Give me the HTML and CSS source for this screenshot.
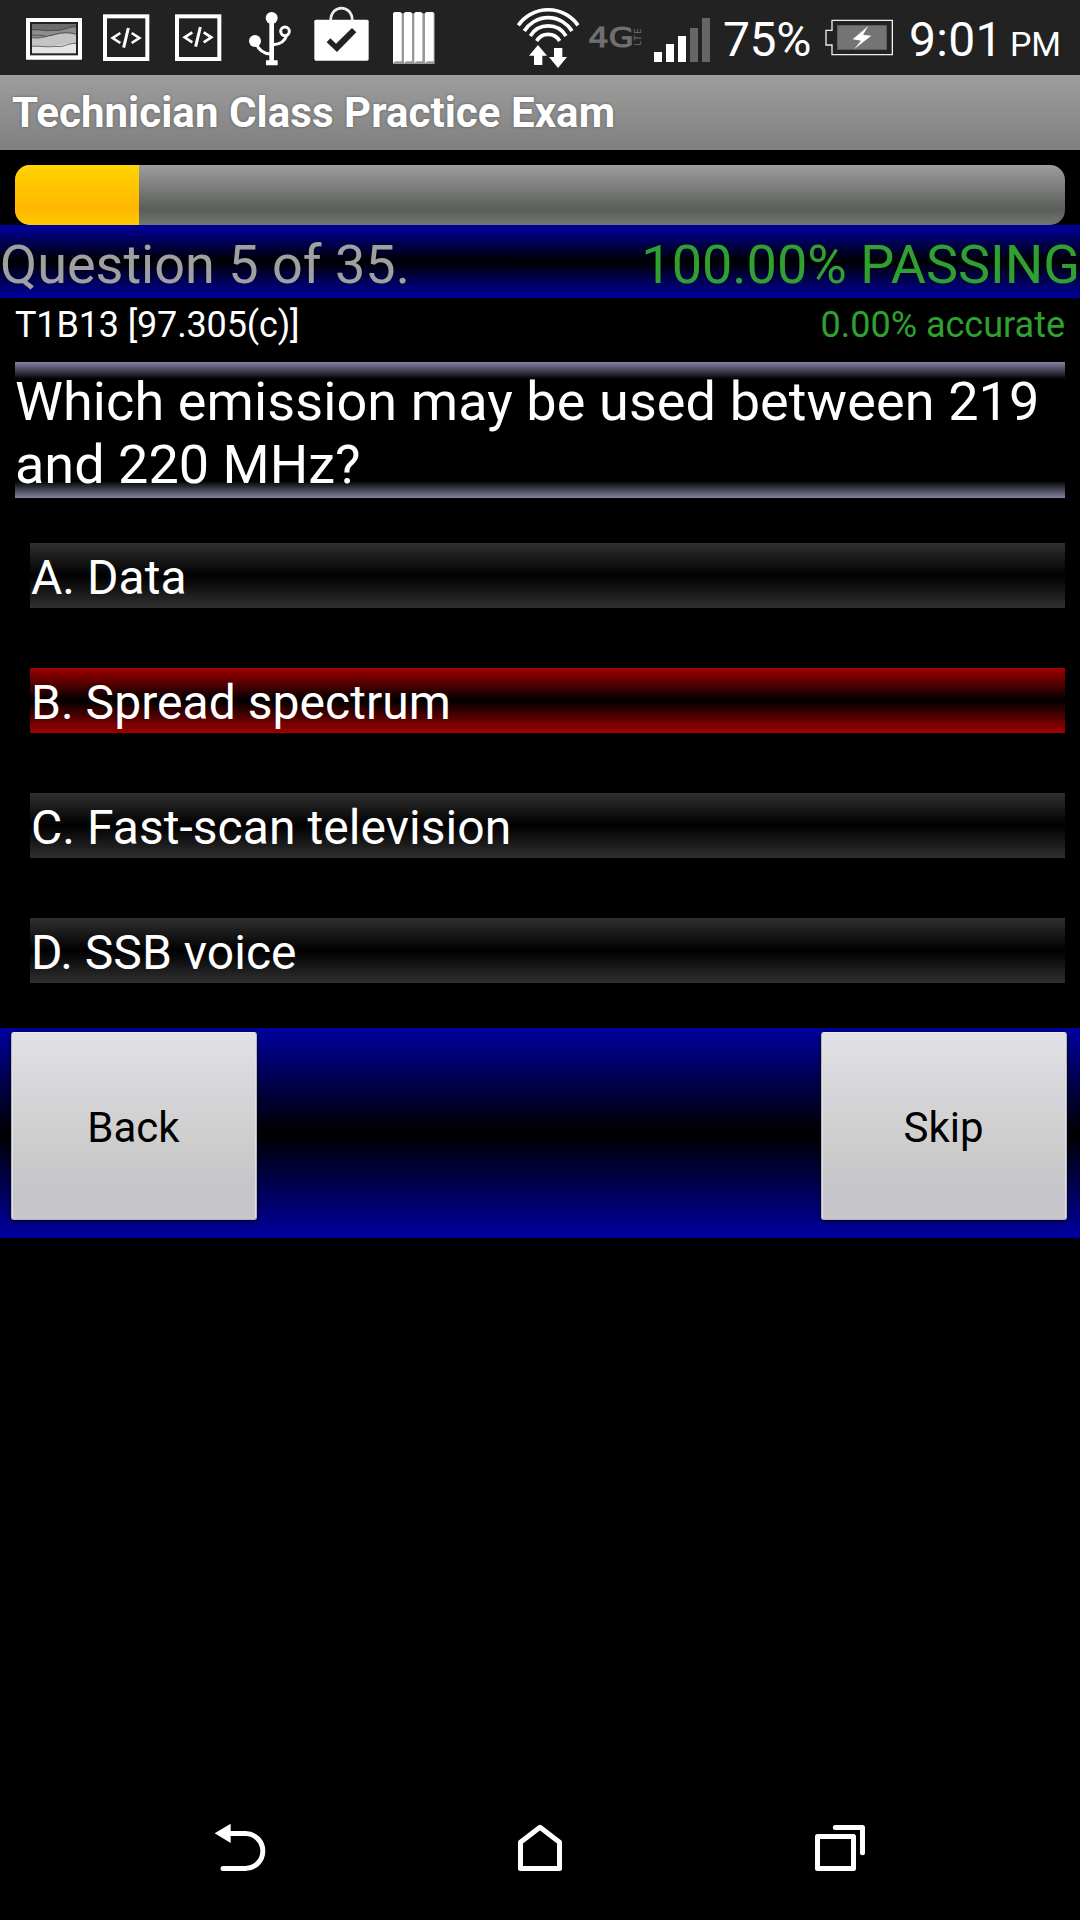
FILE: index.html
```html
<!DOCTYPE html>
<html lang="en">
<head>
<meta charset="utf-8">
<title>Technician Class Practice Exam</title>
<link rel="stylesheet" href="styles.css">
</head>
<body>
<div class="screen">
  <header class="status">
    <svg class="i-image" viewBox="75 0 174 225">
      <rect x="78" y="54" width="168" height="125" rx="2" fill="#fff"/>
      <rect x="90" y="66" width="144" height="100" fill="#222"/>
      <rect x="96" y="72" width="132" height="88" fill="#e6e6e6"/>
      <path d="M96 72H228V130C190 130 175 144 96 139Z" fill="#c4c4c4"/>
      <path d="M96 72H228V103C180 92 165 110 140 109C120 115 110 115 96 113Z" fill="#8d8d8d"/>
      <path d="M96 72H228V80C200 80 190 94 160 91C130 95 115 86 96 90Z" fill="#6c6c6c"/>
      <g fill="none" stroke="#333" stroke-width="2"><path d="M96 90C115 86 130 95 160 91C190 94 200 80 228 80"/><path d="M96 113C125 118 140 107 158 105C180 98 205 95 228 103"/><path d="M96 105C115 107 125 104 140 110"/><path d="M96 139C125 137 135 143 165 139C195 143 195 131 228 130"/></g>
    </svg>
    <svg class="i-code" viewBox="306 0 144 225">
      <g fill="none" stroke="#fff"><rect x="315" y="49" width="127" height="128" stroke-width="12"/><path d="M361 99L338 114L361 129M395 99L418 114L395 129" stroke-width="8"/><path d="M385 84L371 143" stroke-width="9"/></g>
    </svg>
    <svg class="i-code second" viewBox="306 0 144 225">
      <g fill="none" stroke="#fff"><rect x="315" y="49" width="127" height="128" stroke-width="12"/><path d="M361 97L338 112L361 127M395 97L418 112L395 127" stroke-width="8"/><path d="M385 81L371 140" stroke-width="9"/></g>
    </svg>
    <svg class="i-usb" viewBox="-36 0 135 225">
      <g fill="#fff"><circle cx="35" cy="54" r="18"/><circle cx="-15" cy="123" r="18"/><path d="M28 60H42V181H53V196H18V181H28Z"/></g>
      <g fill="none" stroke="#fff"><circle cx="75" cy="94" r="13" stroke-width="9"/><path d="M-12 130Q0 160 32 162M81 104Q72 133 40 134" stroke-width="9"/></g>
    </svg>
    <svg class="i-bag" viewBox="159 0 171 225">
      <rect x="163" y="59" width="163" height="123" rx="5" fill="#fff"/>
      <path d="M212 62C212 12 277 12 277 62" fill="none" stroke="#eee" stroke-width="8"/>
      <path d="M200 127L211 115L228 131L276 84L289 97L231 156Z" fill="#222"/>
    </svg>
    <svg class="i-bars" viewBox="396 0 132 225">
      <path d="M399 40L404 36H420L425 40L431 40L436 36H451L456 40L462 40L467 36H483L488 40L494 40L499 36H519L524 40V192H399Z" fill="#999"/>
      <path d="M399 40L404 36H420L425 40V184H405L399 190ZM432 40L437 36H451L456 40V184H438L432 190ZM463 40L468 36H482L487 40V184H469L463 190ZM495 40L500 36H518L521 40V184H501L495 190Z" fill="#fff"/>
    </svg>
    <svg class="i-wifi" viewBox="48 0 195 225">
      <g fill="none" stroke="#fff" stroke-width="11"><path d="M55 76A109 109 0 0 1 234 76"/><path d="M73 93A84 84 0 0 1 216 93"/><path d="M91 108A62.500 62.500 0 0 1 198 108"/><path d="M110 123A40 40 0 0 1 179 123"/></g>
      <path d="M114 135L141 167H127V195H102V167H87ZM162 144H187V171H201L174 204L147 171H162Z" fill="#fff"/>
    </svg>
    <svg class="i-lte" viewBox="264 0 165 225">
      <g class="lte-text" fill="#707070">
        <text class="g4" x="265" y="140" textLength="136" lengthAdjust="spacingAndGlyphs">4G</text>
        <text class="lte" transform="translate(423 137) rotate(-90)" textLength="52" lengthAdjust="spacing">LTE</text>
      </g>
    </svg>
    <svg class="i-signal" viewBox="459 0 174 225">
      <path d="M462 156H486V186H462ZM498 132H522V186H498ZM534 108H558V186H534Z" fill="#fff"/>
      <path d="M570 84H594V186H570ZM606 54H630V186H606Z" fill="#666"/>
    </svg>
    <span class="percent">75%</span>
    <svg class="i-battery" viewBox="135 0 207 225">
      <path d="M156 61H337V164H156V135H138V91H156Z" fill="none" stroke="#eee" stroke-width="4"/>
      <rect x="172" y="76" width="148" height="73" fill="#747474" stroke="#606060" stroke-width="2"/>
      <path d="M265 78L218 118L243 122L222 148L274 107L249 104Z" fill="#fff"/>
    </svg>
    <span class="clock">9:01</span><span class="ampm">PM</span>
  </header>

  <h1 class="title">Technician Class Practice Exam</h1>

  <main>
    <div class="progress"><div class="fill" style="width:124px"></div></div>
    <div class="score"><span>Question 5 of 35.</span><span class="good">100.00% PASSING</span></div>
    <div class="meta"><span class="ref">T1B13 [97.305(c)]</span><span class="good">0.00% accurate</span></div>
    <div class="question">Which emission may be used between 219<br><span class="tight">and 220 MHz?</span></div>
    <div class="answers">
      <div class="answer">A. Data</div>
      <div class="answer chosen">B. Spread spectrum</div>
      <div class="answer">C. Fast-scan television</div>
      <div class="answer">D. SSB voice</div>
    </div>
    <div class="actions"><button>Back</button><button>Skip</button></div>
  </main>

  <nav class="nav">
    <svg viewBox="61 54 180 180"><path d="M75 100L123 71V129Z" fill="#fff"/><path d="M120 100.500H167A52.500 52.500 0 0 1 167 205.500H100" fill="none" stroke="#fff" stroke-width="15" stroke-linecap="round"/></svg>
    <svg viewBox="960 54 180 180"><path d="M1050 82L1108.500 127V205.500H991.500V127Z" fill="none" stroke="#fff" stroke-width="15" stroke-linejoin="round"/></svg>
    <svg viewBox="150 54 180 180"><path d="M172.500 109.500H280.500V205.500H172.500ZM226 82.500H307.500V158" fill="none" stroke="#fff" stroke-width="15" stroke-linejoin="round" stroke-linecap="round"/></svg>
  </nav>
</div>
</body>
</html>
```
FILE: styles.css
```css
* { box-sizing: border-box; }

body {
  margin: 0;
  background: #000;
  color: #fff;
  font-family: Roboto, "Noto Sans", sans-serif;
}

.screen {
  display: flex;
  flex-direction: column;
  width: 1080px;
  height: 1920px;
  overflow: hidden;
  background: #000;
}

/* Status bar */
.status {
  display: flex;
  height: 75px;
  background: #222;
  white-space: nowrap;
}
.status svg { flex: none; height: 75px; }
.status span { flex: none; padding-top: 4px; line-height: 71px; }
.i-image { width: 58px; margin-left: 25px; }
.i-code { width: 48px; margin-left: 19px; }
.i-code.second { margin-left: 24px; }
.i-usb { width: 45px; margin-left: 26px; }
.i-bag { width: 57px; margin-left: 20px; }
.i-bars { width: 44px; margin-left: 22px; }
.i-wifi { width: 65px; margin-left: 80px; }
.i-lte { width: 55px; margin-left: 7px; }
.i-signal { width: 58px; margin-left: 10px; }
.i-battery { width: 69px; margin-left: 14px; }
.lte-text { font-family: "DejaVu Sans", sans-serif; }
.g4 { font-size: 80px; stroke: #707070; stroke-width: 3px; }
.lte { font-size: 27px; }
.percent { width: 88px; margin-left: 12px; font-size: 48px; letter-spacing: -.4px; }
.clock { width: 95px; margin-left: 15px; font-size: 48px; letter-spacing: .3px; }
.status .ampm { margin-left: 6px; padding-top: 14px; line-height: 61px; font-size: 34px; letter-spacing: -.2px; }

/* Title */
.title {
  height: 75px;
  margin: 0;
  padding-left: 12px;
  background: linear-gradient(#9d9d9d, #808080);
  font-size: 42px;
  font-weight: bold;
  line-height: 75px;
  letter-spacing: .06px;
  text-shadow: 0 0 3px rgba(0, 0, 0, .4);
}

/* Progress and score */
.progress {
  height: 60px;
  margin: 15px 15px 0;
  border-radius: 15px;
  overflow: hidden;
  background: linear-gradient(#9d9e9d, #5a5d5a 75%, #747674);
}
.fill { height: 100%; background: linear-gradient(#ffd300, #ffb600 75%, #ffcb00); }

.score {
  display: flex;
  justify-content: space-between;
  height: 73px;
  padding-top: 6px;
  background: linear-gradient(#0000a0, #000, #0000a0);
  color: #a0a0a0;
  font-size: 54px;
  line-height: 67px;
}
.good { color: #30a030; }

.meta {
  display: flex;
  justify-content: space-between;
  height: 64px;
  padding: 0 15px;
  font-size: 36px;
  line-height: 54px;
}
.ref { letter-spacing: -.15px; }

.question {
  height: 136px;
  margin: 0 15px;
  padding-top: 8px;
  background: linear-gradient(#8484a4, #000 17px, #000 119px, #8484a4);
  font-size: 54px;
  line-height: 63px;
  letter-spacing: .1px;
  white-space: nowrap;
}
.tight { letter-spacing: 0; }

/* Answers */
.answers {
  display: grid;
  gap: 60px;
  padding: 45px 15px 45px 30px;
}
.answer {
  height: 65px;
  padding: 4px 0 0 1px;
  background: linear-gradient(#303030, #000, #303030);
  font-size: 48px;
  line-height: 61px;
  letter-spacing: .05px;
}
.answer.chosen { background: linear-gradient(#a00000, #000, #a00000); }

/* Buttons */
.actions {
  display: flex;
  justify-content: space-between;
  height: 210px;
  padding: 4px 13px 0 11px;
  background: linear-gradient(#0000a0, #000, #0000a0);
}
.actions button {
  width: 246px;
  height: 188px;
  padding: 3px 1px 0 0;
  border: 1px solid #b4b4bc;
  border-top-color: #e8e8ee;
  border-radius: 3px;
  background: linear-gradient(#e0e0e6, #cdcdcd 60%, #c5c4ca 85%, #c6c6cb);
  box-shadow: inset 1px 0 #e0e0e4, inset -1px 0 #e0e0e4, 0 1px 4px rgba(0, 0, 0, .7);
  color: #000;
  font: 42px/183px Roboto, "Noto Sans", sans-serif;
}

/* Navigation bar */
.nav {
  display: grid;
  grid-template-columns: repeat(3, 300px);
  place-content: center;
  justify-items: center;
  height: 144px;
  margin-top: auto;
}
.nav svg { width: 60px; height: 60px; }
```
